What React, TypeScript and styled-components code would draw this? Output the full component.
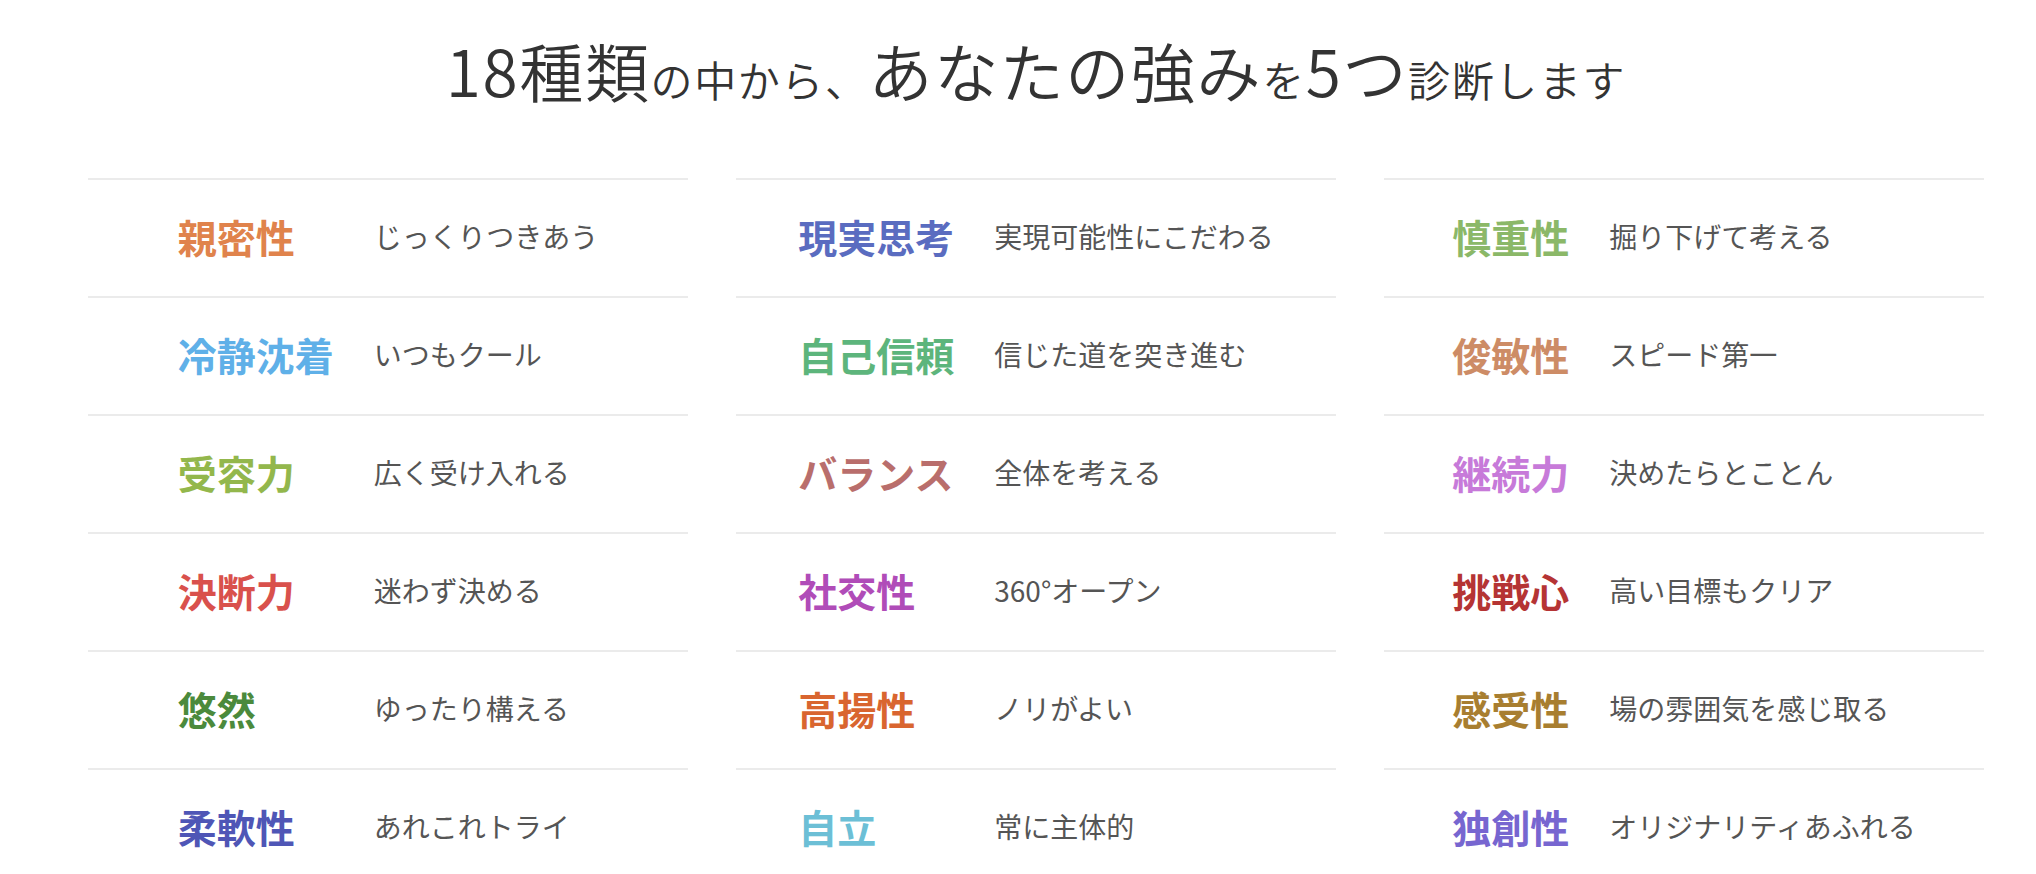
import React from "react";
import styled, { createGlobalStyle } from "styled-components";

const GlobalStyle = createGlobalStyle`
  html, body {
    margin: 0;
    padding: 0;
    background: #ffffff;
  }
  body {
    font-family: "Noto Sans CJK JP", "Noto Sans", sans-serif;
    color: #333333;
  }
`;

const Page = styled.main`
  width: 1896px;
  margin-left: 88px;
  padding-top: 19px;
`;

const Title = styled.h1`
  margin: 0 0 59px 0;
  text-align: center;
  font-weight: 350;
  font-size: 64px;
  line-height: 100px;
  height: 100px;
  color: #333333;
  letter-spacing: 1.6px;
`;

const Small = styled.span`
  font-size: 42px;
`;

const Columns = styled.section`
  display: grid;
  grid-template-columns: repeat(3, 1fr);
  column-gap: 48px;
`;

const Column = styled.div`
  display: grid;
  grid-template-columns: 1fr auto auto 1fr;
  align-content: start;
`;

const Row = styled.div`
  grid-column: 1 / -1;
  display: grid;
  grid-template-columns: subgrid;
  align-items: center;
  height: 118px;
  box-sizing: border-box;
  padding-bottom: 4px;
  border-top: 2px solid #ebebeb;
`;

const Name = styled.span<{ $color: string }>`
  grid-column: 2;
  font-size: 39px;
  font-weight: 700;
  color: ${(p) => p.$color};
  white-space: nowrap;
`;

const Desc = styled.span`
  grid-column: 3;
  padding-left: 40px;
  font-size: 28px;
  font-weight: 400;
  color: #555555;
  white-space: nowrap;
`;

type Trait = { name: string; desc: string; color: string };

const columns: Trait[][] = [
  [
    { name: "親密性", desc: "じっくりつきあう", color: "#e0834c" },
    { name: "冷静沈着", desc: "いつもクール", color: "#5fb0e8" },
    { name: "受容力", desc: "広く受け入れる", color: "#93b74c" },
    { name: "決断力", desc: "迷わず決める", color: "#d9514c" },
    { name: "悠然", desc: "ゆったり構える", color: "#4b8a3c" },
    { name: "柔軟性", desc: "あれこれトライ", color: "#4f56b6" },
  ],
  [
    { name: "現実思考", desc: "実現可能性にこだわる", color: "#5a6cc0" },
    { name: "自己信頼", desc: "信じた道を突き進む", color: "#5db57c" },
    { name: "バランス", desc: "全体を考える", color: "#b96e6c" },
    { name: "社交性", desc: "360°オープン", color: "#b04cb8" },
    { name: "高揚性", desc: "ノリがよい", color: "#d9652f" },
    { name: "自立", desc: "常に主体的", color: "#6cbfd6" },
  ],
  [
    { name: "慎重性", desc: "掘り下げて考える", color: "#8bb868" },
    { name: "俊敏性", desc: "スピード第一", color: "#cd8c66" },
    { name: "継続力", desc: "決めたらとことん", color: "#c77ad9" },
    { name: "挑戦心", desc: "高い目標もクリア", color: "#b53434" },
    { name: "感受性", desc: "場の雰囲気を感じ取る", color: "#a87e30" },
    { name: "独創性", desc: "オリジナリティあふれる", color: "#7766d0" },
  ],
];

export default function App() {
  return (
    <>
      <GlobalStyle />
      <Page>
        <Title>
          18種類<Small>の中から、</Small>あなたの強み<Small>を</Small>5つ
          <Small>診断します</Small>
        </Title>
        <Columns>
          {columns.map((col, i) => (
            <Column key={i}>
              {col.map((t) => (
                <Row key={t.name}>
                  <Name $color={t.color}>{t.name}</Name>
                  <Desc>{t.desc}</Desc>
                </Row>
              ))}
            </Column>
          ))}
        </Columns>
      </Page>
    </>
  );
}
